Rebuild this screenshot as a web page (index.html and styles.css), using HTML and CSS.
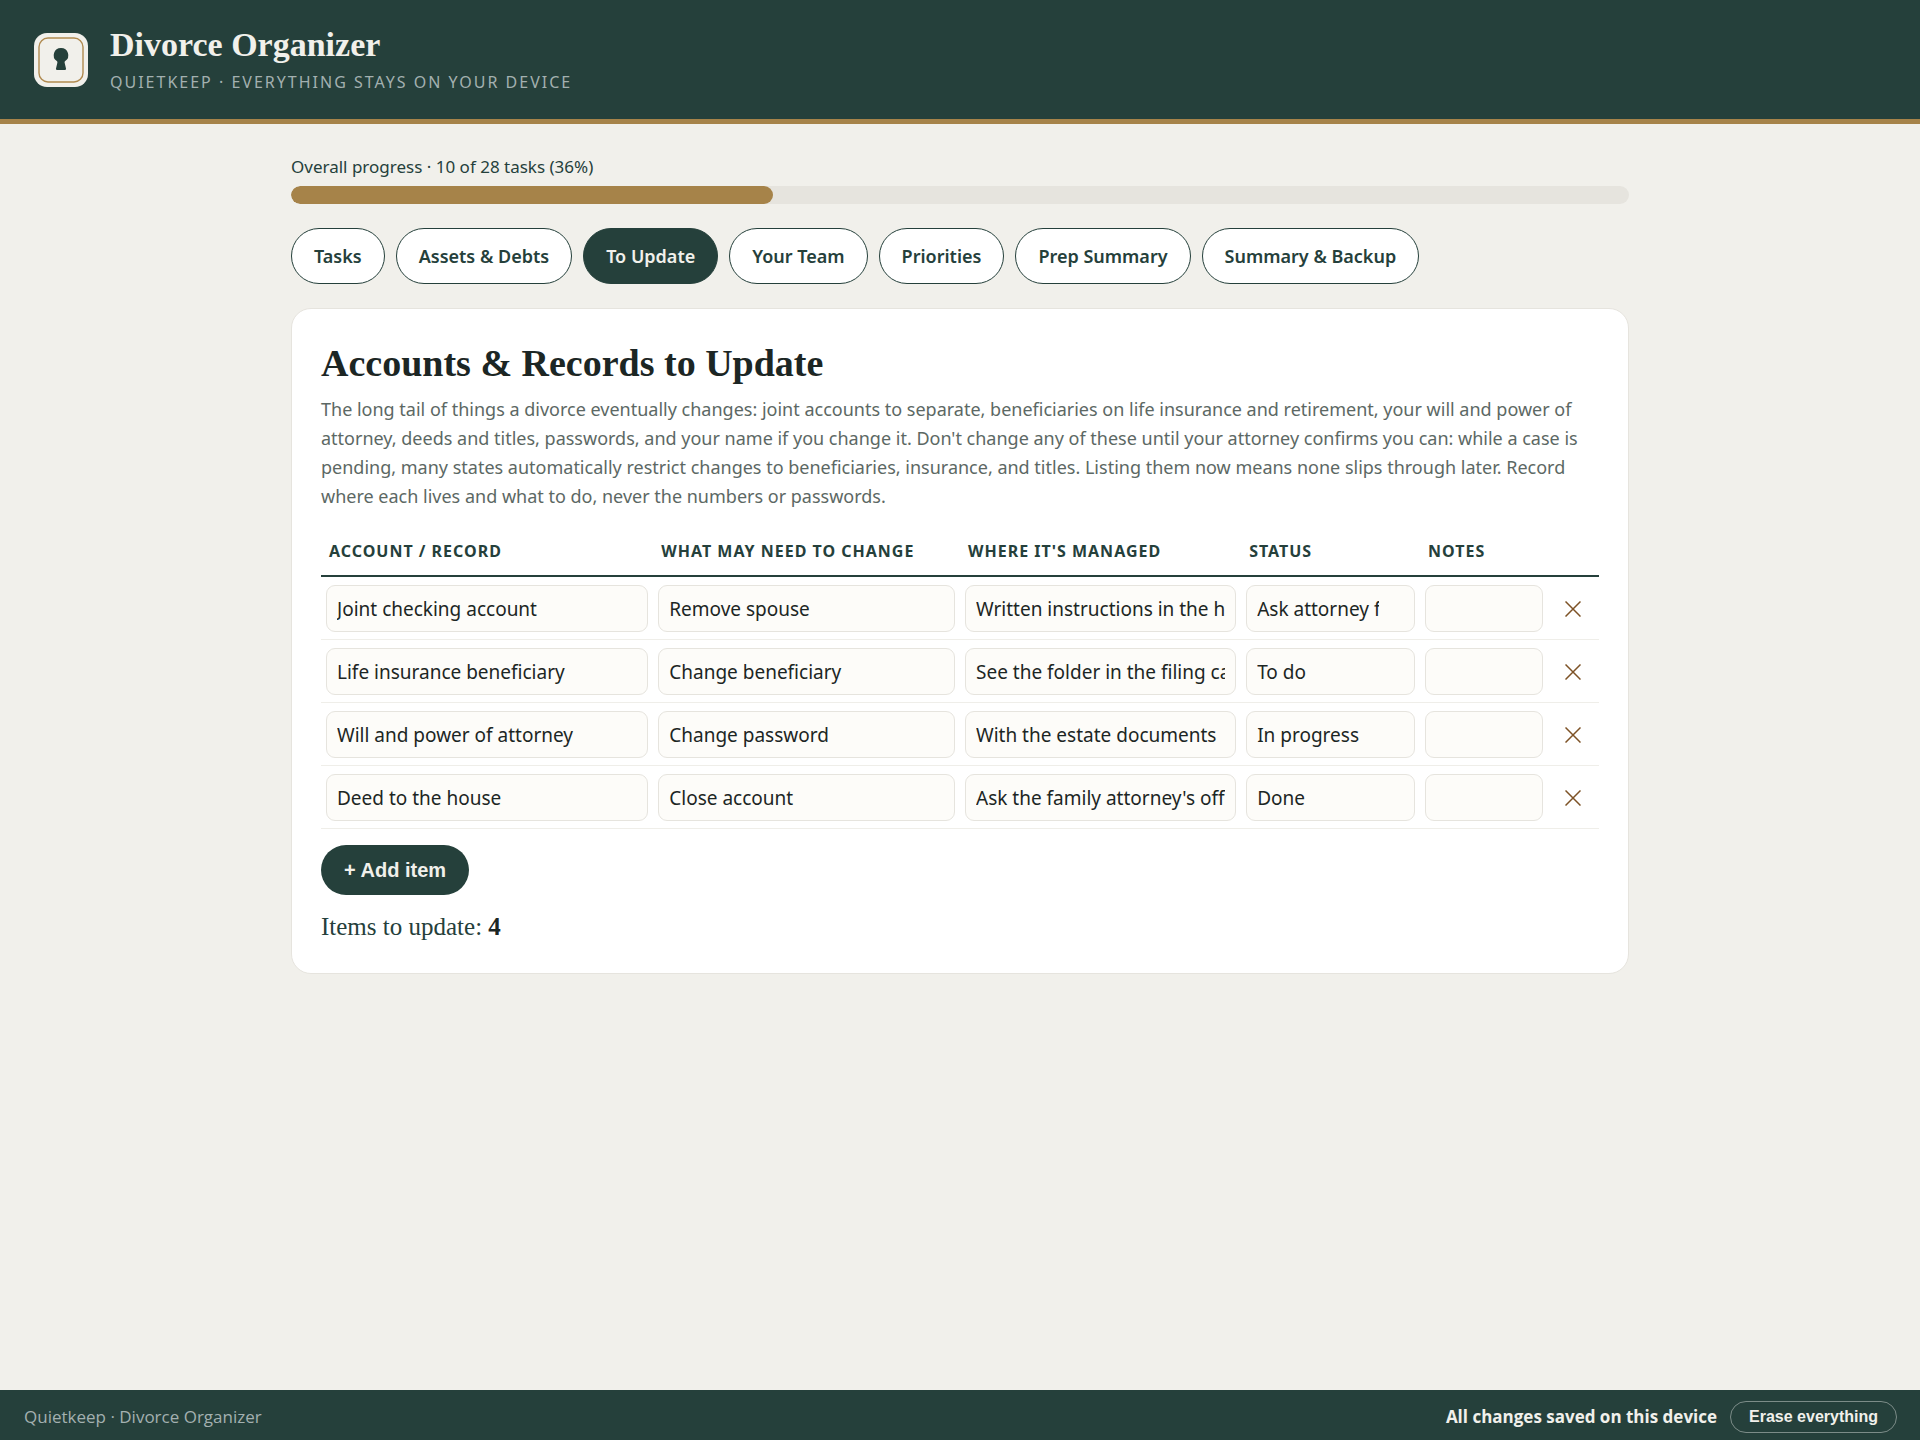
FILE: index.html
```
<!DOCTYPE html>
<html lang="en">
<head>
  <meta charset="UTF-8">
  <meta name="viewport" content="width=device-width, initial-scale=1">
  <title>Divorce Organizer</title>
  <link rel="stylesheet" href="styles.css">
</head>
<body>

  <header class="top">
    <svg class="logo" viewBox="0 0 54 54" aria-hidden="true">
      <rect width="54" height="54" rx="13" fill="#f1f0eb"/>
      <rect x="5" y="5" width="44" height="44" rx="9" fill="none" stroke="#b08a50" stroke-width="1.4"/>
      <path d="M27 15a7.2 7.2 0 0 0-4.2 13.1c.6.5.7 1 .5 1.8L22 35.6c-.2.9.2 1.4 1 1.4h8c.8 0 1.2-.5 1-1.4l-1.300-5.700c-.2-.8-.1-1.300.5-1.800A7.200 7.200 0 0 0 27 15z" fill="#25403b"/>
    </svg>
    <div>
      <h1>Divorce Organizer</h1>
      <div class="tagline">Quietkeep · Everything stays on your device</div>
    </div>
  </header>

  <main>
    <div class="progress-label">Overall progress · 10 of 28 tasks (36%)</div>
    <div class="progress"><div class="progress-fill" style="width: 36%"></div></div>

    <nav class="tabs">
      <button type="button">Tasks</button>
      <button type="button">Assets &amp; Debts</button>
      <button type="button" class="active">To Update</button>
      <button type="button">Your Team</button>
      <button type="button">Priorities</button>
      <button type="button">Prep Summary</button>
      <button type="button">Summary &amp; Backup</button>
    </nav>

    <section class="card">
      <h2>Accounts &amp; Records to Update</h2>
      <p class="intro">The long tail of things a divorce eventually changes: joint accounts to separate, beneficiaries on life insurance and retirement, your will and power of attorney, deeds and titles, passwords, and your name if you change it. Don't change any of these until your attorney confirms you can: while a case is pending, many states automatically restrict changes to beneficiaries, insurance, and titles. Listing them now means none slips through later. Record where each lives and what to do, never the numbers or passwords.</p>

      <table>
        <colgroup>
          <col class="col-account"><col class="col-change"><col class="col-where">
          <col class="col-status"><col class="col-notes"><col class="col-del">
        </colgroup>
        <thead>
          <tr>
            <th>Account / Record</th>
            <th>What may need to change</th>
            <th>Where it's managed</th>
            <th>Status</th>
            <th>Notes</th>
            <th></th>
          </tr>
        </thead>
        <tbody>
          <tr>
            <td><input type="text" aria-label="Account / Record" value="Joint checking account"></td>
            <td><input type="text" aria-label="What may need to change" value="Remove spouse"></td>
            <td><input type="text" aria-label="Where it's managed" value="Written instructions in the home safe"></td>
            <td><input type="text" aria-label="Status" list="statuses" value="Ask attorney first"></td>
            <td><input type="text" aria-label="Notes"></td>
            <td><button type="button" class="del" aria-label="Remove"><svg viewBox="0 0 16 16"><path d="M0.500 0.500l15 15M15.500 0.500l-15 15"/></svg></button></td>
          </tr>
          <tr>
            <td><input type="text" aria-label="Account / Record" value="Life insurance beneficiary"></td>
            <td><input type="text" aria-label="What may need to change" value="Change beneficiary"></td>
            <td><input type="text" aria-label="Where it's managed" value="See the folder in the filing cabinet"></td>
            <td><input type="text" aria-label="Status" list="statuses" value="To do"></td>
            <td><input type="text" aria-label="Notes"></td>
            <td><button type="button" class="del" aria-label="Remove"><svg viewBox="0 0 16 16"><path d="M0.500 0.500l15 15M15.500 0.500l-15 15"/></svg></button></td>
          </tr>
          <tr>
            <td><input type="text" aria-label="Account / Record" value="Will and power of attorney"></td>
            <td><input type="text" aria-label="What may need to change" value="Change password"></td>
            <td><input type="text" aria-label="Where it's managed" value="With the estate documents"></td>
            <td><input type="text" aria-label="Status" list="statuses" value="In progress"></td>
            <td><input type="text" aria-label="Notes"></td>
            <td><button type="button" class="del" aria-label="Remove"><svg viewBox="0 0 16 16"><path d="M0.500 0.500l15 15M15.500 0.500l-15 15"/></svg></button></td>
          </tr>
          <tr>
            <td><input type="text" aria-label="Account / Record" value="Deed to the house"></td>
            <td><input type="text" aria-label="What may need to change" value="Close account"></td>
            <td><input type="text" aria-label="Where it's managed" value="Ask the family attorney's office"></td>
            <td><input type="text" aria-label="Status" list="statuses" value="Done"></td>
            <td><input type="text" aria-label="Notes"></td>
            <td><button type="button" class="del" aria-label="Remove"><svg viewBox="0 0 16 16"><path d="M0.500 0.500l15 15M15.500 0.500l-15 15"/></svg></button></td>
          </tr>
        </tbody>
      </table>
      <datalist id="statuses">
        <option value="To do"></option>
        <option value="Ask attorney first"></option>
        <option value="In progress"></option>
        <option value="Done"></option>
      </datalist>

      <button type="button" class="add">+ Add item</button>
      <div class="total">Items to update: <b>4</b></div>
    </section>
  </main>

  <footer>
    <span>Quietkeep · Divorce Organizer</span>
    <div class="footer-right">
      <strong>All changes saved on this device</strong>
      <button type="button" class="erase">Erase everything</button>
    </div>
  </footer>

</body>
</html>
```
FILE: styles.css
```
:root {
  --green: #25403b;
  --gold: #a68349;
  --paper: #f1f0eb;
  --line: #e6e4de;
  --ink: #1c2624;
  --sans: "Segoe UI", "Noto Sans", "Open Sans", sans-serif;
  --serif: Georgia, "Liberation Serif", serif;
}
* {
  box-sizing: border-box;
}
body {
  margin: 0;
  min-height: 100vh;
  display: flex;
  flex-direction: column;
  background: var(--paper);
  color: var(--ink);
  font-family: var(--sans);
  font-size: 18px;
  line-height: 29px;
}
.top {
  display: flex;
  align-items: center;
  gap: 22px;
  padding: 22px 34px;
  background: var(--green);
  border-bottom: 5px solid var(--gold);
}
.logo {
  width: 54px;
  height: 54px;
}
h1, h2 {
  margin: 0;
  font-family: var(--serif);
  font-weight: bold;
}
h1 {
  font-size: 34px;
  line-height: 46px;
  color: var(--paper);
}
.tagline {
  font-size: 16px;
  letter-spacing: 2px;
  text-transform: uppercase;
  color: #a3b0b0;
}
main {
  flex: 1;
  width: 100%;
  max-width: 1338px;
  margin: 0 auto;
  padding: 28px 0;
}
.progress-label {
  font-size: 17px;
  color: var(--green);
}
.progress {
  height: 18px;
  margin-top: 5px;
  border-radius: 9px;
  background: var(--line);
  overflow: hidden;
}
.progress-fill {
  height: 100%;
  border-radius: 9px;
  background: var(--gold);
}
.tabs {
  display: flex;
  flex-wrap: wrap;
  gap: 11px;
  margin: 24px 0;
}
.tabs button {
  padding: 13px 22px;
  border: 1px solid var(--green);
  border-radius: 28px;
  background: white;
  color: var(--green);
  font-family: var(--sans);
  font-size: 18px;
  font-weight: 600;
  line-height: 28px;
  cursor: pointer;
}
.tabs button.active {
  background: var(--green);
  color: var(--paper);
}
.card {
  padding: 32px 29px;
  background: white;
  border: 1px solid var(--line);
  border-radius: 20px;
}
h2 {
  font-size: 38px;
  line-height: 44px;
}
.intro {
  margin: 10px 0 16px;
  color: #5c6864;
}
table {
  width: 100%;
  table-layout: fixed;
  border-collapse: collapse;
}
.col-account { width: 26%; }
.col-change { width: 24%; }
.col-where { width: 22%; }
.col-status { width: 14%; }
.col-notes { width: 10%; }
.col-del { width: 4%; }
th {
  padding: 10px 8px 9px;
  border-bottom: 2px solid var(--green);
  color: var(--green);
  font-size: 16px;
  font-weight: 700;
  letter-spacing: 1px;
  text-align: left;
  text-transform: uppercase;
  white-space: nowrap;
}
td {
  padding: 8px 5px 7px;
  border-bottom: 1px solid #efeee9;
  line-height: 0;
}
td input {
  width: 100%;
  height: 47px;
  padding: 0 10px;
  border: 1px solid var(--line);
  border-radius: 9px;
  background: #fdfcf9;
  color: var(--ink);
  font-family: var(--sans);
  font-size: 19px;
}
.del {
  display: block;
  margin: 0 auto;
  padding: 4px;
  border: none;
  background: none;
  cursor: pointer;
}
.del svg {
  display: block;
  width: 16px;
  height: 16px;
  fill: none;
  stroke: #7d5226;
  stroke-width: 1.5;
}
.add {
  margin-top: 16px;
  padding: 0 23px;
  border: none;
  border-radius: 25px;
  background: var(--green);
  color: var(--paper);
  font: bold 20px/50px "Liberation Sans", Arial, sans-serif;
  cursor: pointer;
}
.total {
  margin-top: 17px;
  font-family: var(--serif);
  font-size: 25px;
  color: var(--green);
}
.total b {
  color: var(--ink);
}
footer {
  display: flex;
  justify-content: space-between;
  align-items: center;
  height: 50px;
  padding: 3px 23px 0 24px;
  background: var(--green);
  color: #a3b0b0;
  font-family: "Segoe UI", "Open Sans", sans-serif;
  font-size: 17px;
}
.footer-right {
  display: flex;
  align-items: center;
  gap: 13px;
  color: var(--paper);
}
.erase {
  padding: 0 18px;
  border: 1px solid #7c8c88;
  border-radius: 16px;
  background: none;
  color: var(--paper);
  font: bold 16px/30px "Liberation Sans", Arial, sans-serif;
  cursor: pointer;
}
```
